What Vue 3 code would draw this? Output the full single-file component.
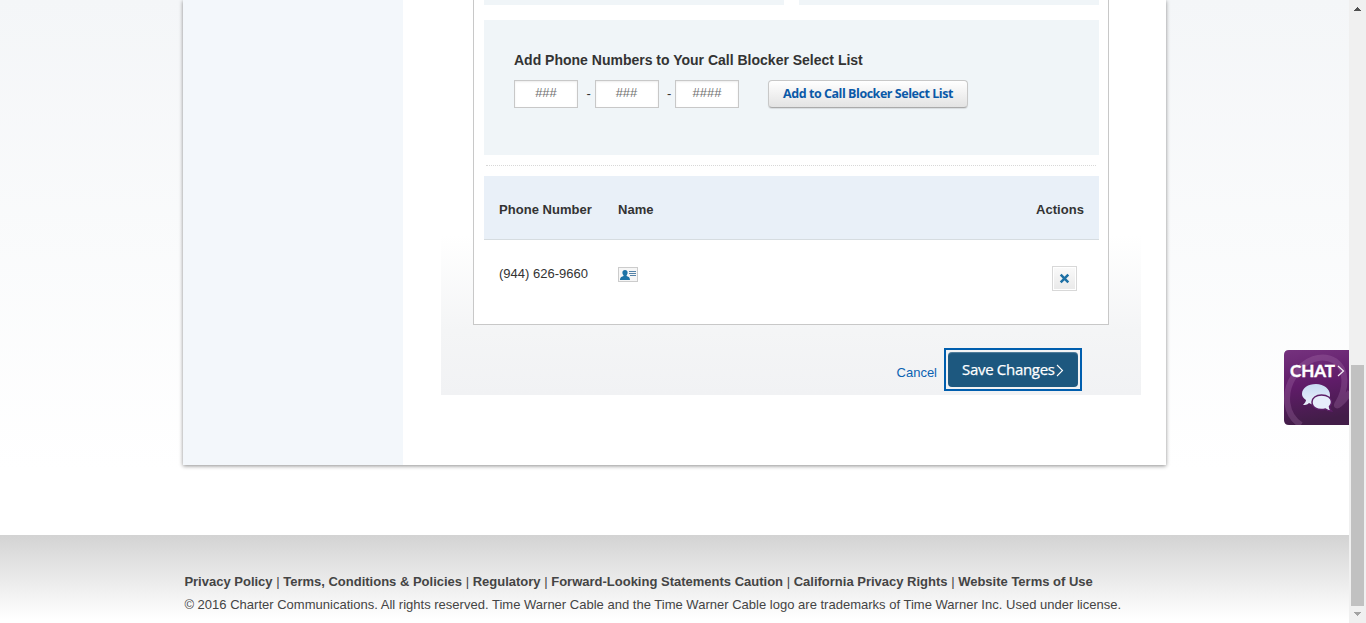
<script setup>
const fields = [
  { id: 'area', hint: '###' },
  { id: 'prefix', hint: '###' },
  { id: 'line', hint: '####' },
]
const links = [
  'Privacy Policy',
  'Terms, Conditions & Policies',
  'Regulatory',
  'Forward-Looking Statements Caution',
  'California Privacy Rights',
  'Website Terms of Use',
]
</script>

<template>
  <div class="window">
    <div class="page">
      <main class="sheet">
        <aside class="sidebar"></aside>
        <section class="content">
          <div class="form">
            <div class="panel">
              <div class="tops"><span></span><span></span></div>
              <div class="add">
                <h2>Add Phone Numbers to Your Call Blocker Select List</h2>
                <div class="entry">
                  <template v-for="(f, i) in fields" :key="f.id">
                    <span v-if="i" class="dash">-</span>
                    <input type="text" :placeholder="f.hint" :aria-label="f.id" />
                  </template>
                  <button class="add-btn" type="button"><span>Add to Call Blocker Select List</span></button>
                </div>
              </div>
              <div class="rule"></div>
              <div class="thead">
                <span class="c-phone">Phone Number</span>
                <span class="c-name">Name</span>
                <span class="c-actions">Actions</span>
              </div>
              <div class="row">
                <span class="c-phone">(944) 626-9660</span>
                <span class="card-icon">
                  <svg width="18" height="13" viewBox="0 0 18 13">
                    <path d="M6 2C7.7 2 8.7 3 8.6 4.5C8.6 6 8 6.7 7.6 7.2V8C8.9 8.6 11 8.9 11 12H1C1 8.9 3.2 8.6 4.5 8V7.2C4 6.7 3.4 6 3.4 4.5C3.4 3 4.3 2 6 2Z" fill="#1d73a6" />
                    <path d="M10 3.5H17M10 5.5H17M11 7.5H17" stroke="#5583a8" stroke-width="1" />
                  </svg>
                </span>
                <button class="remove" type="button" aria-label="Remove">
                  <svg width="11" height="11" viewBox="0 0 11 11">
                    <path d="M1.7 1.7L9.3 9.3M9.3 1.7L1.7 9.3" stroke="#1d70a5" stroke-width="2.5" />
                  </svg>
                </button>
              </div>
            </div>
            <div class="buttons">
              <a class="cancel">Cancel</a>
              <div class="focus-ring">
                <button class="save" type="button">
                  <span>Save Changes</span>
                  <svg width="8" height="13" viewBox="0 0 8 13"><path d="M1 1L6.5 6.5L1 12" fill="none" stroke="#fff" stroke-width="1.1" /></svg>
                </button>
              </div>
            </div>
          </div>
        </section>
      </main>
      <footer class="footer">
        <nav>
          <template v-for="(l, i) in links" :key="l"><span v-if="i" class="bar"> | </span><a>{{ l }}</a></template>
        </nav>
        <p>© 2016 Charter Communications. All rights reserved. Time Warner Cable and the Time Warner Cable logo are trademarks of Time Warner Inc. Used under license.</p>
      </footer>
    </div>
    <div class="scrollbar">
      <svg width="17" height="17" viewBox="0 0 17 17" shape-rendering="crispEdges"><path d="M8 7h1v1h1v1h1v1h1v1H5v-1h1v-1h1v-1h1z" fill="#505050" /></svg>
      <div class="thumb"></div>
      <svg width="17" height="17" viewBox="0 0 17 17" shape-rendering="crispEdges"><path d="M5 6h7v1h-1v1h-1v1H9v1H8V9H7V8H6V7H5z" fill="#a3a3a3" /></svg>
    </div>
    <a class="chat">
      <svg class="art" width="65" height="75" viewBox="0 0 65 75">
        <defs>
          <linearGradient id="violet" x1="0" y1="0" x2="0.15" y2="1">
            <stop offset="0" stop-color="#75327e" /><stop offset="0.5" stop-color="#601c69" /><stop offset="1" stop-color="#421d48" />
          </linearGradient>
          <linearGradient id="bubble" x1="0" y1="0" x2="0" y2="1">
            <stop offset="0" stop-color="#c8dbf3" /><stop offset="1" stop-color="#eaf0fb" />
          </linearGradient>
        </defs>
        <path d="M5 0H65V75H5Q0 75 0 70V5Q0 0 5 0Z" fill="url(#violet)" />
        <path d="M17 75C1 65-1 43 10 26C20 9 38 3 51 11C63 19 63 38 54 53C50 59 58 54 66 42" fill="none" stroke="#b07cb4" stroke-opacity=".27" stroke-width="6" stroke-linejoin="round" />
        <path d="M32 34C40 34 46 39 46 45C46 51 40 55 32 55C29 55 27 54 25 53C23 55 21 55 19 55C21 53 22 51 22 50C19 48 18 46 18 44C18 38 24 34 32 34Z" fill="url(#bubble)" />
        <path d="M37.5 45C43.5 45 47.5 48 47.5 52C47.5 54 46.5 55.5 45.5 56.5C45.5 58 46 59.5 47.5 61C45 61 43 60 41.5 59C33 61 28 57 28 52C28 48 32 45 37.5 45Z" fill="#e7edfb" stroke="#5d1e67" stroke-width="1.5" />
        <path d="M54 16L59.5 21L54 26" fill="none" stroke="#f5eef7" stroke-width="1.2" />
      </svg>
      <span class="chat-text">CHAT</span>
    </a>
  </div>
</template>

<style>
body { overflow: hidden; }
</style>

<style scoped>
.window { display: flex; position: relative; width: 1366px; height: 623px; overflow: hidden; font-family: "Liberation Sans", Arial, sans-serif; font-size: 13px; color: #333; }
.window * { box-sizing: border-box; }
.page { width: 1349px; height: 623px; background: linear-gradient(#f4f6f8 0, #fff 470px); }
.sheet { display: flex; width: 983px; height: 465px; margin-left: 183px; background: #fff; box-shadow: 0 1px 4px rgba(0, 0, 0, .45); }
.sidebar { width: 220px; background: #f3f7fb; }
.content { padding-left: 38px; }
.form { width: 700px; height: 395px; padding: 0 32px; background: linear-gradient(#fff 235px, #f4f5f6 330px, #f1f2f4 395px); }
.panel { width: 636px; height: 325px; padding: 0 9px 0 10px; border: 1px solid #c8c8c8; border-top: 0; background: #fff; }
.tops { display: flex; gap: 15px; height: 5px; margin-bottom: 15px; }
.tops span { width: 300px; background: #f0f5f8; }
.add { width: 615px; height: 135px; padding: 30px 0 0 30px; background: #f0f5f8; }
h2 { margin: 0; height: 30px; font-size: 14px; line-height: 20px; white-space: nowrap; }
.entry { display: flex; height: 28px; }
input { width: 64px; height: 28px; padding: 0 0 3px; border: 1px solid #c8c8c8; border-radius: 0; background: #fff; box-shadow: inset 0 1px 2px rgba(0, 0, 0, .08); font: 13px "Liberation Sans", Arial, sans-serif; text-align: center; color: #757575; }
input::placeholder { color: #707070; }
.dash { width: 16.5px; padding-left: 8.5px; line-height: 28px; }
.add-btn { width: 200px; height: 28px; margin-left: 29px; padding: 0 0 2px; border: 1px solid #c8c8c8; border-bottom-color: #aaa; border-radius: 4px; background: linear-gradient(#fff, #e3e3e3); box-shadow: 0 1px 1px rgba(0, 0, 0, .1); font: 700 12.5px "Open Sans", sans-serif; letter-spacing: -.46px; color: #0a59a8; white-space: nowrap; }
.rule { width: 610px; margin: 10px 0 10px 2px; border-top: 1px dotted #d8d8d8; }
.thead { display: flex; width: 615px; height: 64px; padding: 4px 15px 0; align-items: center; border-bottom: 1px solid #d6dce0; background: #e9f0f8; font-weight: bold; letter-spacing: .04px; }
.c-phone { width: 119px; }
.c-actions { margin-left: auto; }
.row { display: flex; width: 615px; height: 84px; padding: 26px 22px 0 15px; }
.row .c-phone { line-height: 15px; }
.card-icon { width: 20px; height: 15px; margin-top: 1px; border: 1px solid #ccc; background: #f6f6f6; }
.card-icon svg, .remove svg { display: block; }
.remove { display: flex; align-items: center; justify-content: center; width: 25px; height: 25px; margin-left: auto; padding: 0; border: 1px solid #d8d8d8; background: linear-gradient(#fafafa, #e9e9e9); box-shadow: inset 0 0 0 1px #fff; }
.buttons { display: flex; align-items: flex-start; justify-content: flex-end; padding: 23px 27px 0 0; }
.cancel { margin: 17px 7px 0 0; line-height: 15px; color: #0b62b2; }
.focus-ring { padding: 2px; border: 2px solid #005eae; }
.save { display: flex; align-items: center; width: 130px; height: 35px; padding: 0 0 0 14px; border: 0; border-radius: 4px; background: #1d587f; box-shadow: inset 0 1px 1px rgba(255, 255, 255, .25); font: 15px "Open Sans", sans-serif; letter-spacing: -.3px; color: #fff; white-space: nowrap; }
.save span { padding-bottom: 2px; -webkit-text-stroke: .25px #fff; }
.save svg { margin: 1px 0 0 1px; }
.footer { height: 88px; margin-top: 70px; padding: 38px 0 0 184.4px; background: linear-gradient(#d3d3d3, #fff 84px); color: #444; }
nav { height: 23px; line-height: 17px; font-weight: bold; white-space: pre; }
.bar { font-weight: normal; }
p { margin: 0; line-height: 17px; letter-spacing: .01px; white-space: nowrap; }
.scrollbar { display: flex; flex-direction: column; width: 17px; height: 623px; background: #f0f0f0; }
.thumb { width: 13px; height: 241px; margin: auto 0 0 2px; background: #c1c1c1; }
.chat { position: absolute; left: 1284px; top: 350px; width: 65px; height: 75px; color: #fff; }
.art { display: block; }
.chat-text { position: absolute; left: 6px; top: 10px; font: 700 17px/22px Lato, sans-serif; letter-spacing: -.1px; -webkit-text-stroke: .4px #fff; }
</style>
